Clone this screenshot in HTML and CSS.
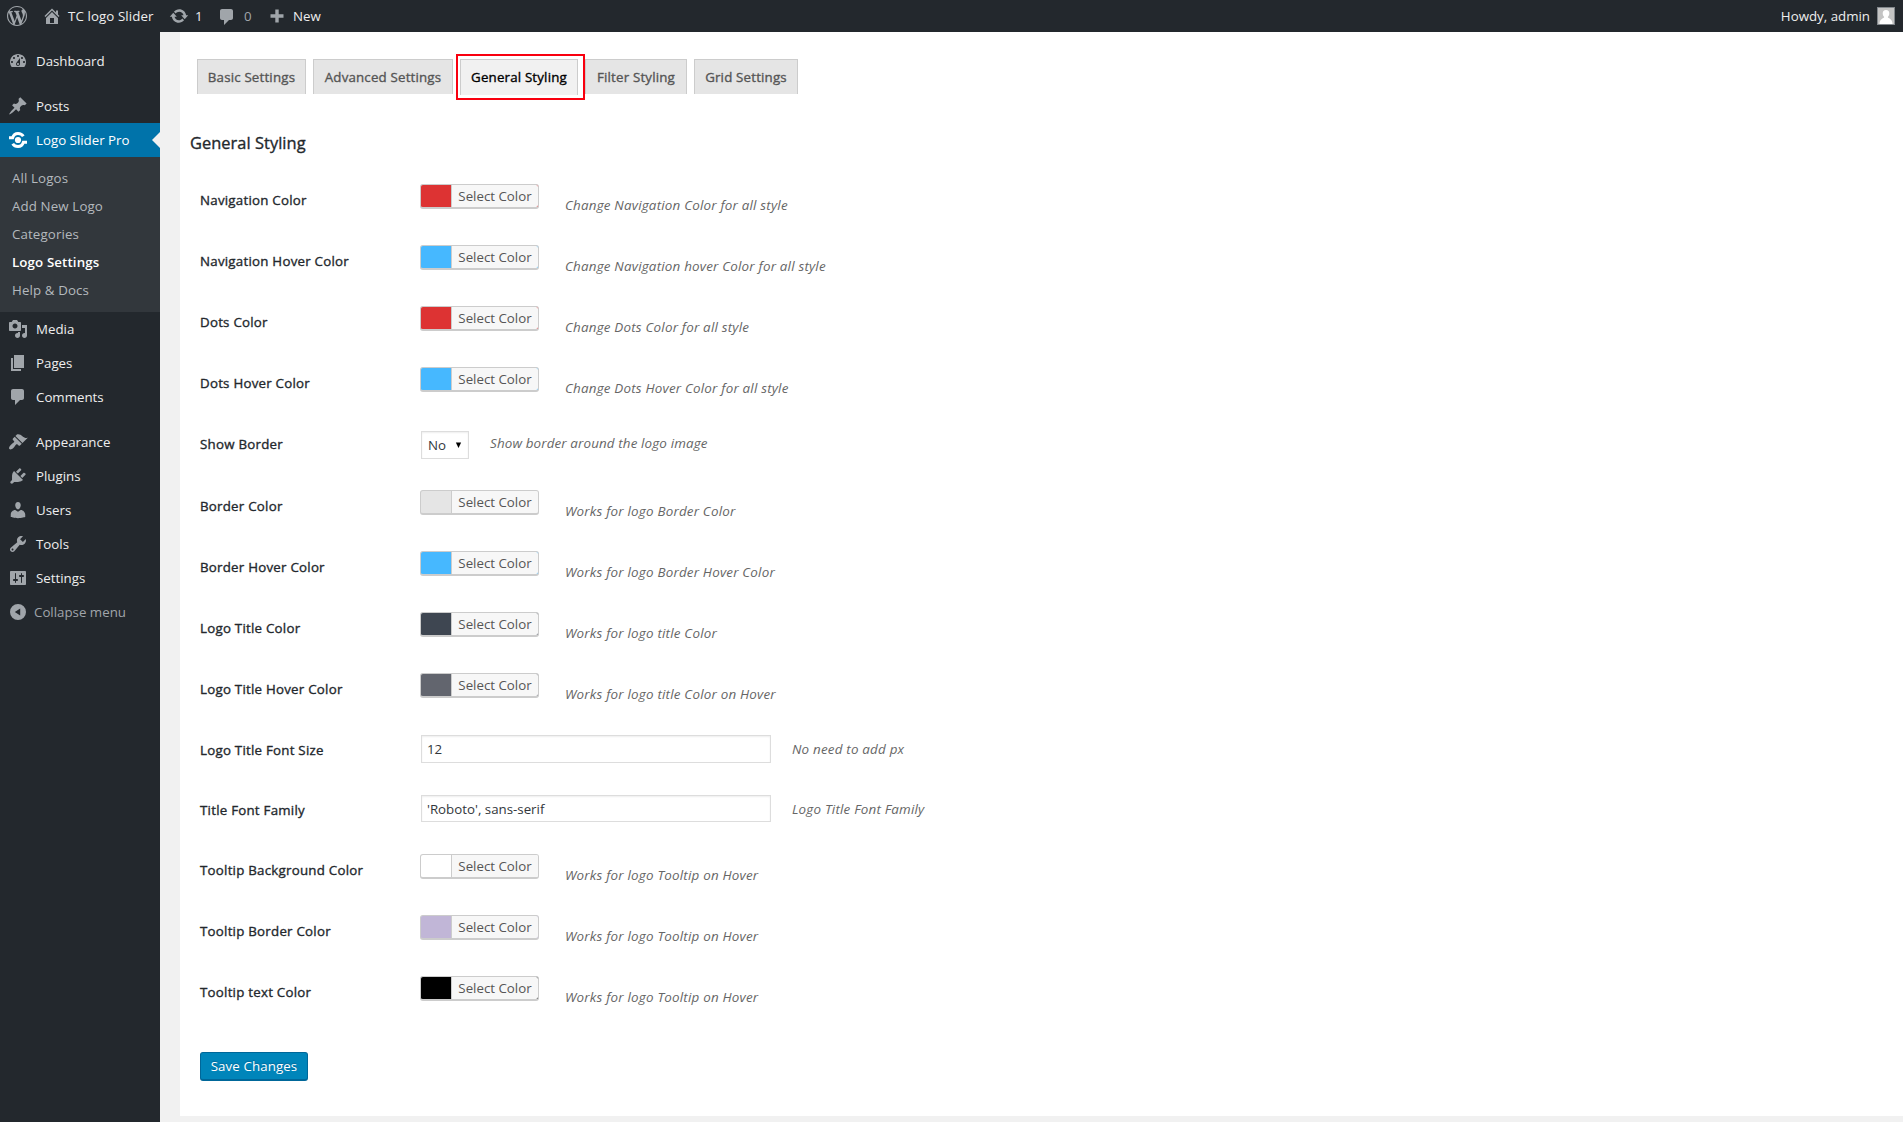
FILE: index.html
```html
<!DOCTYPE html>
<html lang="en">
<head>
<meta charset="utf-8">
<title>General Styling</title>
<link rel="stylesheet" href="styles.css">
</head>
<body>
<header class="adminbar">
  <svg class="ico wp" viewBox="0 0 20 20"><path d="M20 10c0-5.51-4.49-10-10-10C4.48 0 0 4.49 0 10c0 5.52 4.48 10 10 10 5.51 0 10-4.48 10-10zM7.78 15.37L4.37 6.22c.55-.02 1.17-.08 1.17-.08.5-.06.44-1.13-.06-1.11 0 0-1.45.11-2.37.11-.18 0-.37 0-.58-.01C4.12 2.69 6.87 1.11 10 1.11c2.33 0 4.45.87 6.05 2.34-.68-.11-1.65.39-1.65 1.58 0 .74.45 1.36.9 2.1.35.61.55 1.36.55 2.46 0 1.49-1.4 5-1.4 5l-3.03-8.37c.54-.02.82-.17.82-.17.5-.05.44-1.25-.06-1.22 0 0-1.44.12-2.38.12-.87 0-2.33-.12-2.33-.12-.5-.03-.56 1.2-.06 1.22l.92.08 1.26 3.41zM17.41 10c.24-.64.74-1.87.43-4.25.7 1.29 1.05 2.71 1.05 4.25 0 3.29-1.73 6.24-4.4 7.78.97-2.59 1.94-5.2 2.92-7.78zM6.1 18.09C3.12 16.65 1.11 13.53 1.11 10c0-1.3.23-2.48.72-3.59C3.25 10.3 4.67 14.2 6.1 18.09zm4.03-6.63l2.58 6.98c-.86.29-1.76.45-2.71.45-.79 0-1.57-.11-2.29-.33.81-2.38 1.62-4.74 2.42-7.1z"/></svg>
  <div class="bar-item site"><svg class="ico" viewBox="0 0 20 20"><path d="M16 8.5l1.53 1.53-1.06 1.06L10 4.6l-6.47 6.49-1.06-1.06L10 2.5l4 4v-2h2v4zm-6-2.46l6 5.99V18H4v-5.97zM12 17v-5H8v5h4z"/></svg><span>TC logo Slider</span></div>
  <div class="bar-item updates"><svg class="ico" viewBox="0 0 20 20"><path d="M10.2 3.28c3.53 0 6.43 2.61 6.92 6h2.08l-3.5 4-3.5-4h2.32c-.45-1.97-2.21-3.45-4.32-3.45-1.45 0-2.73.71-3.54 1.78L4.95 5.66C6.23 4.2 8.11 3.28 10.2 3.28zm-.4 13.44c-3.52 0-6.43-2.61-6.92-6H.8l3.5-4c1.17 1.33 2.33 2.67 3.5 4H5.48c.45 1.97 2.21 3.45 4.32 3.45 1.45 0 2.73-.71 3.54-1.78l1.71 1.95c-1.28 1.46-3.15 2.38-5.25 2.38z"/></svg><span>1</span></div>
  <div class="bar-item comments"><svg class="ico" viewBox="0 0 20 20"><path d="M5 2h9c1.1 0 2 .9 2 2v7c0 1.1-.9 2-2 2h-2l-5 5v-5H5c-1.1 0-2-.9-2-2V4c0-1.1.9-2 2-2z"/></svg><span>0</span></div>
  <div class="bar-item new"><svg class="ico" viewBox="0 0 20 20"><path d="M8.3 3.5h3.4v4.8h4.8v3.4h-4.8v4.8H8.300v-4.800H3.500V8.300h4.800z"/></svg><span>New</span></div>
  <div class="bar-item user"><span>Howdy, admin</span><svg class="avatar" viewBox="0 0 18 18"><path class="av-frame" d="M0 0h18v18H0z"/><path class="av-bg" d="M1 1h16v16H1z"/><path class="av-man" d="M9 3a3.300 3.500 0 0 1 3.300 3.600c0 1.600-.7 2.700-1.500 3.300 0 1.300 4.700 1.600 4.700 7.100h-13c0-5.500 4.700-5.800 4.700-7.100-.8-.6-1.500-1.700-1.500-3.300A3.300 3.500 0 0 1 9 3z"/></svg></div>
</header>
<div class="body">
  <nav class="menu">
    <a class="item gap"><svg class="ico" viewBox="0 0 20 20"><path d="M3.760 16h12.480c1.100-1.370 1.760-3.110 1.760-5 0-4.420-3.580-8-8-8s-8 3.580-8 8c0 1.890.66 3.630 1.760 5zM10 4c.55 0 1 .45 1 1s-.45 1-1 1-1-.45-1-1 .45-1 1-1zM6 6c.55 0 1 .45 1 1s-.45 1-1 1-1-.45-1-1 .45-1 1-1zm8 0c.55 0 1 .45 1 1s-.45 1-1 1-1-.45-1-1 .45-1 1-1zm-5.370 5.550L12 7v6c0 1.100-.9 2-2 2s-2-.9-2-2c0-.57.24-1.080.63-1.450zM4 10c.55 0 1 .45 1 1s-.45 1-1 1-1-.45-1-1 .45-1 1-1zm12 0c.55 0 1 .45 1 1s-.45 1-1 1-1-.45-1-1 .45-1 1-1zm-5 3c0-.55-.45-1-1-1s-1 .45-1 1 .45 1 1 1 1-.45 1-1z"/></svg><span>Dashboard</span></a>
    <a class="item"><svg class="ico" viewBox="0 0 20 20"><path d="M10.44 3.02l1.82-1.82 6.36 6.35-1.83 1.82c-1.05-.68-2.48-.57-3.41.36l-.75.75c-.92.93-1.04 2.35-.35 3.41l-1.83 1.82-2.41-2.41-2.8 2.79c-.42.42-3.38 2.71-3.8 2.29s1.86-3.39 2.28-3.81l2.79-2.79L4.1 9.360l1.830-1.820c1.050.69 2.480.57 3.400-.36l.75-.75c.93-.92 1.050-2.350.36-3.410z"/></svg><span>Posts</span></a>
    <a class="item current"><svg class="ico" viewBox="0 0 20 20"><circle cx="10" cy="10" r="3.100"/><path class="ring" d="M1 7.800h3.600C5.500 5 7.500 3.500 10 3.500c2.300 0 4.200 1 5.300 2.800M19 12.200h-3.600C14.500 15 12.500 16.500 10 16.500c-2.300 0-4.200-1-5.300-2.800"/></svg><span>Logo Slider Pro</span></a>
    <div class="submenu">
      <a>All Logos</a><a>Add New Logo</a><a>Categories</a><a class="on">Logo Settings</a><a>Help &amp; Docs</a>
    </div>
    <a class="item"><svg class="ico" viewBox="0 0 20 20"><path d="M13 11V4c0-.55-.45-1-1-1h-1.670L9 1H5L3.670 3H2c-.55 0-1 .45-1 1v7c0 .55.45 1 1 1h10c.55 0 1-.45 1-1zM7 4.500c1.380 0 2.500 1.120 2.500 2.500S8.380 9.500 7 9.500 4.500 8.380 4.500 7 5.620 4.500 7 4.500zM14 6h5v10.500c0 1.380-1.120 2.500-2.500 2.500S14 17.880 14 16.500s1.120-2.500 2.500-2.500c.17 0 .34.02.5.05V9h-3V6zm-4 8.050V13h2v3.500c0 1.380-1.120 2.500-2.500 2.500S7 17.880 7 16.500 8.120 14 9.500 14c.17 0 .34.02.5.05z"/></svg><span>Media</span></a>
    <a class="item"><svg class="ico" viewBox="0 0 20 20"><path d="M6 15V2h10v13H6zm-1 1h8v2H3V5h2v11z"/></svg><span>Pages</span></a>
    <a class="item gap"><svg class="ico" viewBox="0 0 20 20"><path d="M5 2h9c1.100 0 2 .9 2 2v7c0 1.100-.9 2-2 2h-2l-5 5v-5H5c-1.100 0-2-.9-2-2V4c0-1.100.9-2 2-2z"/></svg><span>Comments</span></a>
    <a class="item"><svg class="ico" viewBox="0 0 20 20"><path d="M14.48 11.06L7.41 3.99l1.5-1.5c.5-.56 2.3-.47 3.51.32 1.21.8 1.43 1.28 2.91 2.1 1.18.64 2.45 1.26 4.45.85zm-.71.71L6.7 4.7 4.93 6.47c-.39.39-.39 1.02 0 1.41l1.06 1.06c.39.39.39 1.03 0 1.42-.6.6-1.43 1.11-2.21 1.69-.35.26-.7.53-1.01.84C1.43 14.23.4 16.08 1.4 17.07c.99 1 2.84-.03 4.18-1.36.31-.31.58-.66.85-1.02.57-.78 1.08-1.61 1.69-2.21.39-.39 1.02-.39 1.41 0l1.06 1.06c.39.39 1.02.39 1.41 0z"/></svg><span>Appearance</span></a>
    <a class="item"><svg class="ico" viewBox="0 0 20 20"><path d="M13.11 4.36L9.87 7.6 8 5.73l3.24-3.24c.35-.34 1.05-.2 1.56.32.52.51.66 1.21.31 1.55zm-8 1.77l.91-1.12 9.01 9.01-1.19.84c-.71.71-2.63 1.16-3.82 1.16H6.14L4.9 17.26c-.59.59-1.54.59-2.12 0-.59-.58-.59-1.53 0-2.12l1.24-1.24v-3.88c0-1.13.4-3.19 1.09-3.89zm7.26 3.97l3.24-3.24c.34-.35 1.04-.21 1.55.31.52.51.66 1.21.31 1.55l-3.24 3.25z"/></svg><span>Plugins</span></a>
    <a class="item"><svg class="ico" viewBox="0 0 20 20"><path d="M10 9.25c-2.27 0-2.73-3.44-2.73-3.44C7 4.02 7.82 2 9.97 2c2.16 0 2.98 2.02 2.71 3.81 0 0-.41 3.44-2.68 3.44zm0 2.57L12.72 10c2.39 0 4.52 2.33 4.52 4.53v2.49s-3.65 1.13-7.24 1.13c-3.65 0-7.24-1.13-7.24-1.13v-2.49c0-2.25 1.94-4.48 4.47-4.48z"/></svg><span>Users</span></a>
    <a class="item"><svg class="ico" viewBox="0 0 20 20"><path d="M16.68 9.77c-1.34 1.34-3.3 1.67-4.95.99l-5.41 6.52c-.99.99-2.59.99-3.58 0s-.99-2.59 0-3.57l6.52-5.42c-.68-1.65-.35-3.61.99-4.95 1.28-1.28 3.12-1.62 4.72-1.06l-2.89 2.89 2.82 2.82 2.86-2.87c.53 1.58.18 3.39-1.08 4.65zM3.81 16.21c.4.39 1.04.39 1.43 0 .4-.4.4-1.04 0-1.43-.39-.4-1.03-.4-1.43 0-.39.39-.39 1.03 0 1.43z"/></svg><span>Tools</span></a>
    <a class="item"><svg class="ico" viewBox="0 0 20 20"><path d="M18 16V4c0-.55-.45-1-1-1H3c-.55 0-1 .45-1 1v12c0 .55.45 1 1 1h14c.55 0 1-.45 1-1zM8 11h1c.55 0 1 .45 1 1s-.45 1-1 1H8v1.500c0 .28-.22.5-.5.5s-.5-.22-.5-.5V13H6c-.55 0-1-.45-1-1s.45-1 1-1h1V5.500c0-.28.22-.5.5-.5s.5.22.5.5V11zm5-2h-1c-.55 0-1-.45-1-1s.45-1 1-1h1V5.500c0-.28.22-.5.5-.5s.5.22.5.5V7h1c.55 0 1 .45 1 1s-.45 1-1 1h-1v5.500c0 .28-.22.5-.5.5s-.5-.22-.5-.5V9z"/></svg><span>Settings</span></a>
    <a class="item collapse"><svg class="ico" viewBox="0 0 20 20"><path fill-rule="evenodd" d="M10 2a8 8 0 1 1 0 16 8 8 0 0 1 0-16zM12.200 6.500L6.800 10l5.400 3.500z"/></svg><span>Collapse menu</span></a>
  </nav>
  <main class="panel">
    <div class="tabs">
      <a class="tab t1">Basic Settings</a><a class="tab t2">Advanced Settings</a><a class="tab t3 active">General Styling</a><a class="tab t4">Filter Styling</a><a class="tab t5">Grid Settings</a>
    </div>
    <h2>General Styling</h2>
    <form class="form">
      <div class="row"><label>Navigation Color</label><span class="picker red"><b>Select Color</b></span><i>Change Navigation Color for all style</i></div>
      <div class="row"><label>Navigation Hover Color</label><span class="picker blue"><b>Select Color</b></span><i>Change Navigation hover Color for all style</i></div>
      <div class="row"><label>Dots Color</label><span class="picker red"><b>Select Color</b></span><i>Change Dots Color for all style</i></div>
      <div class="row"><label>Dots Hover Color</label><span class="picker blue"><b>Select Color</b></span><i>Change Dots Hover Color for all style</i></div>
      <div class="row tall field"><label>Show Border</label><span class="select">No<svg viewBox="0 0 8 8"><path d="M1 1h6L4 7.500z"/></svg></span><i>Show border around the logo image</i></div>
      <div class="row"><label>Border Color</label><span class="picker grey"><b>Select Color</b></span><i>Works for logo Border Color</i></div>
      <div class="row"><label>Border Hover Color</label><span class="picker blue"><b>Select Color</b></span><i>Works for logo Border Hover Color</i></div>
      <div class="row"><label>Logo Title Color</label><span class="picker slate"><b>Select Color</b></span><i>Works for logo title Color</i></div>
      <div class="row"><label>Logo Title Hover Color</label><span class="picker steel"><b>Select Color</b></span><i>Works for logo title Color on Hover</i></div>
      <div class="row short field"><label>Logo Title Font Size</label><input type="text" value="12"><i>No need to add px</i></div>
      <div class="row short field"><label>Title Font Family</label><input class="low" type="text" value="'Roboto', sans-serif"><i>Logo Title Font Family</i></div>
      <div class="row"><label>Tooltip Background Color</label><span class="picker white"><b>Select Color</b></span><i>Works for logo Tooltip on Hover</i></div>
      <div class="row"><label>Tooltip Border Color</label><span class="picker lilac"><b>Select Color</b></span><i>Works for logo Tooltip on Hover</i></div>
      <div class="row"><label>Tooltip text Color</label><span class="picker black"><b>Select Color</b></span><i>Works for logo Tooltip on Hover</i></div>
      <button class="save" type="button">Save Changes</button>
    </form>
  </main>
</div>
</body>
</html>
```
FILE: styles.css
```css
*, *::before, *::after { box-sizing: border-box; }
body {
  margin: 0;
  height: 1122px;
  overflow: hidden;
  display: flex;
  flex-direction: column;
  background: #f1f1f1;
  color: #23282d;
  font-family: "Open Sans", "Noto Sans", sans-serif;
  font-size: 13.3px;
  white-space: nowrap;
}
.ico { width: 20px; height: 20px; fill: #a0a5aa; flex: none; }

/* Toolbar */
.adminbar { height: 32px; flex: none; display: flex; align-items: center; padding: 0 8px 0 7px; background: #23282d; color: #eee; line-height: 32px; }
.bar-item { display: flex; align-items: center; }
.bar-item span { height: 32px; }
.site { margin-left: 15px; width: 127px; gap: 6px; }
.site span { letter-spacing: .1px; }
.updates { width: 48px; gap: 6px; }
.comments { width: 42px; gap: 7px; }
.comments .ico { margin-top: 2px; }
.comments span { color: #a0a5aa; }
.new { margin-left: 8px; gap: 6px; }
.user { margin-left: auto; gap: 7px; }
.avatar { width: 18px; height: 18px; }
.av-frame { fill: #82878c; }
.av-bg { fill: #c4c4c4; }
.av-man { fill: #fff; }

.body { flex: 1; display: flex; min-height: 0; }

/* Side menu */
.menu { width: 160px; flex: none; padding-top: 12px; background: #23282d; color: #eee; }
.item { display: flex; align-items: center; height: 34px; padding-left: 8px; gap: 8px; }
.item.gap { margin-bottom: 11px; }
.item.current { position: relative; background: #0073aa; color: #fff; }
.item.current .ico { fill: #fff; }
.ring { fill: none; stroke: #fff; stroke-width: 3; }
.item.current::after { content: ""; position: absolute; right: 0; top: 9px; border: 8px solid transparent; border-left: 0; border-right-color: #f1f1f1; }
.submenu { height: 155px; padding: 7px 0 0 12px; background: #32373c; color: #b4b9be; letter-spacing: .12px; }
.submenu a { display: block; height: 28px; line-height: 28px; }
.submenu .on { color: #fff; font-weight: 600; }
.collapse { gap: 6px; color: #a0a5aa; }

/* Settings panel */
.panel { flex: 1; margin: 0 0 6px 20px; background: #fff; }
.tabs { display: flex; align-items: flex-start; gap: 7px; height: 46px; margin: 22px 0 0 17px; padding-top: 5px; }
.tab { height: 35px; border: 1px solid #ccc; border-bottom: 0; background: #e5e5e5; color: #555; -webkit-text-stroke: .35px; letter-spacing: .18px; line-height: 34px; text-align: center; }
.t1 { width: 109px; }
.t2 { width: 140px; }
.t3 { width: 118px; }
.t4 { width: 102px; }
.t5 { width: 104px; }
.tab.active { position: relative; height: 36px; background: #f1f1f1; color: #000; }
.tab.active::after { content: ""; position: absolute; left: -5px; top: -6px; width: 129px; height: 46px; border: 2px solid #f9000f; }
h2 { margin: 28px 0 0 10px; height: 30px; line-height: 30px; font-size: 16.4px; font-weight: 400; letter-spacing: .05px; -webkit-text-stroke: .35px; }
.form { margin: 11px 0 0 20px; }
.row { display: flex; align-items: flex-start; height: 61px; }
.row.tall { height: 62px; }
.row.short { height: 60px; }
.row label { width: 220px; padding-top: 21px; line-height: 20px; -webkit-text-stroke: .35px; letter-spacing: .24px; }
.row i { padding-top: 26px; line-height: 20px; color: #666; font-size: 13.4px; letter-spacing: .2px; }
.field i { padding-top: 20px; }
.picker { width: 119px; height: 25px; margin: 15px 26px 0 0; padding-left: 30px; border: 1px solid #ccc; border-bottom-width: 2px; border-radius: 3px; }
.picker b { display: block; height: 22px; border-left: 1px solid #ccc; border-radius: 0 2px 2px 0; background: #f7f7f7; color: #555; font-weight: 400; line-height: 22px; text-align: center; }
.red { background: #dd3333; }
.blue { background: #46b8ff; }
.grey { background: #e5e5e5; }
.slate { background: #3e4651; }
.steel { background: #62656e; }
.white { background: #fff; }
.lilac { background: #c1b6d7; }
.black { background: #000; }
.select { display: flex; align-items: center; justify-content: space-between; width: 48px; height: 28px; margin: 18px 21px 0 1px; padding: 0 6px; border: 1px solid #ddd; box-shadow: inset 0 1px 2px rgba(0,0,0,.07); color: #32373c; }
.select + i { letter-spacing: .13px; }
.select svg { width: 7px; height: 8px; }
input { width: 350px; height: 28px; margin: 16px 21px 0 1px; padding: 0 5px; border: 1px solid #ddd; box-shadow: inset 0 1px 2px rgba(0,0,0,.07); background: #fff; color: #32373c; font: inherit; }
input.low { height: 27px; }
.save { display: block; width: 108px; height: 29px; margin-top: 30px; padding: 0; border: 1px solid #006799; border-bottom-width: 2px; border-radius: 3px; background: #0085ba; color: #fff; font: inherit; letter-spacing: .1px; text-shadow: 0 -1px 1px #006799; }
```
